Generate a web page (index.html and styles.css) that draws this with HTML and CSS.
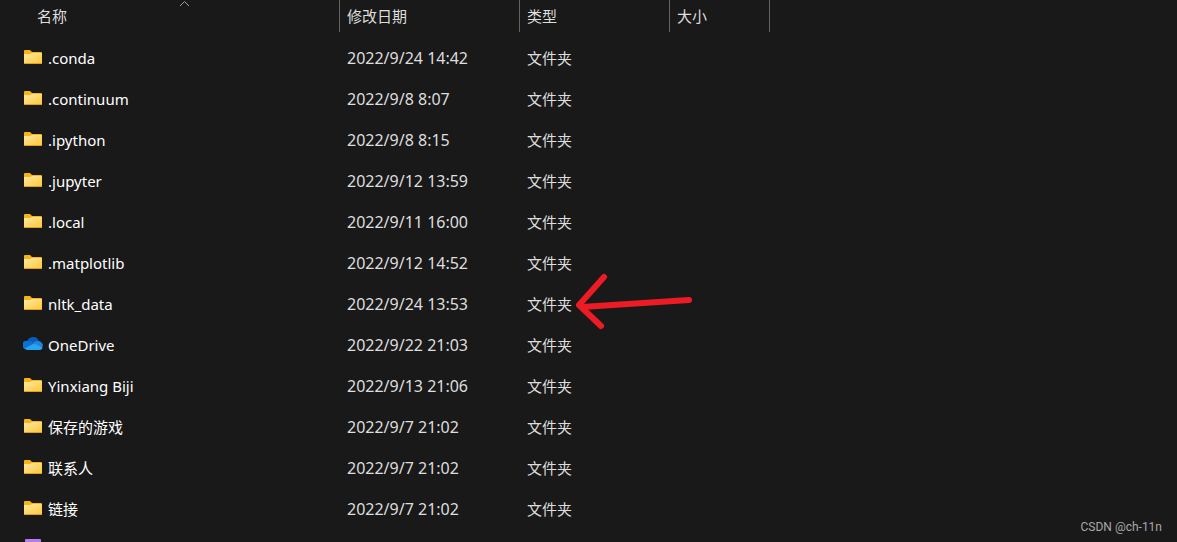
FILE: index.html
```html
<!DOCTYPE html>
<html lang="zh-CN">
<head>
    <meta charset="UTF-8">
    <meta name="viewport" content="width=device-width, initial-scale=1.0">
    <title>文件夹</title>
    <link rel="stylesheet" href="styles.css">
</head>
<body>
    <!-- Shared icons -->
    <svg class="sprites" aria-hidden="true">
        <defs>
            <linearGradient id="folder-front" x1="0" y1="0" x2="1" y2="1">
                <stop offset="0" stop-color="#ffe8a3"></stop>
                <stop offset="1" stop-color="#fdc93c"></stop>
            </linearGradient>
            <symbol id="folder" viewBox="0 0 20 16">
                <path d="M1 2a1 1 0 0 1 1-1h5l2 2h9a1 1 0 0 1 1 1v10H1z" fill="#f7b416"></path>
                <path d="M1 5h6l2-1h10v9a1 1 0 0 1-1 1H2a1 1 0 0 1-1-1z" fill="url(#folder-front)"></path>
                <path d="M1 14h18v1H1z" fill="#e0a020"></path>
            </symbol>
            <symbol id="cloud" viewBox="0 0 20 16">
                <path d="M4 6a6.300 6.300 0 0 1 12-1l-3 6-8-2z" fill="#0b5cb8"></path>
                <path d="M5 5c2 0 4 .8 6 2.200L8 12l-6 1A4.200 4.200 0 0 1 5 5z" fill="#0a72d4"></path>
                <path d="M15 5a5 5 0 0 1 5 5l-2 2-8-5a6 6 0 0 1 5-2z" fill="#1a86e0"></path>
                <path d="M1.500 12.500L11 7.500l8.700 4A3 3 0 0 1 17 14H4.500a4 4 0 0 1-3-1.500z" fill="#2aa4ee"></path>
            </symbol>
        </defs>
    </svg>

    <table class="files">
        <colgroup>
            <col class="col-name">
            <col class="col-date">
            <col class="col-type">
            <col class="col-size">
            <col>
        </colgroup>
        <thead>
            <tr>
                <th class="sorted">
                    <div class="head">名称</div>
                    <svg class="caret" viewBox="0 0 11 7"><path d="M1 6l4.500-4.500L10 6" fill="none" stroke="#a0a0a0"></path></svg>
                </th>
                <th><div class="head">修改日期</div></th>
                <th><div class="head">类型</div></th>
                <th><div class="head">大小</div></th>
                <th></th>
            </tr>
        </thead>
        <tbody>
            <tr><td><div class="name"><svg class="icon"><use href="#folder"></use></svg>.conda</div></td><td class="date">2022/9/24 14:42</td><td>文件夹</td><td></td><td></td></tr>
            <tr><td><div class="name"><svg class="icon"><use href="#folder"></use></svg>.continuum</div></td><td class="date">2022/9/8 8:07</td><td>文件夹</td><td></td><td></td></tr>
            <tr><td><div class="name"><svg class="icon"><use href="#folder"></use></svg>.ipython</div></td><td class="date">2022/9/8 8:15</td><td>文件夹</td><td></td><td></td></tr>
            <tr><td><div class="name"><svg class="icon"><use href="#folder"></use></svg>.jupyter</div></td><td class="date">2022/9/12 13:59</td><td>文件夹</td><td></td><td></td></tr>
            <tr><td><div class="name"><svg class="icon"><use href="#folder"></use></svg>.local</div></td><td class="date">2022/9/11 16:00</td><td>文件夹</td><td></td><td></td></tr>
            <tr><td><div class="name"><svg class="icon"><use href="#folder"></use></svg>.matplotlib</div></td><td class="date">2022/9/12 14:52</td><td>文件夹</td><td></td><td></td></tr>
            <tr>
                <td><div class="name"><svg class="icon"><use href="#folder"></use></svg>nltk_data</div></td>
                <td class="date">2022/9/24 13:53</td>
                <td class="marked">文件夹<svg class="arrow" viewBox="0 0 120 60"><path d="M30 5L5 33l22 21M8 35l107-7" fill="none" stroke="#ed1c24" stroke-width="6" stroke-linecap="round" stroke-linejoin="round"></path></svg></td>
                <td></td>
                <td></td>
            </tr>
            <tr><td><div class="name"><svg class="icon"><use href="#cloud"></use></svg>OneDrive</div></td><td class="date">2022/9/22 21:03</td><td>文件夹</td><td></td><td></td></tr>
            <tr><td><div class="name"><svg class="icon"><use href="#folder"></use></svg>Yinxiang Biji</div></td><td class="date">2022/9/13 21:06</td><td>文件夹</td><td></td><td></td></tr>
            <tr><td><div class="name"><svg class="icon"><use href="#folder"></use></svg>保存的游戏</div></td><td class="date">2022/9/7 21:02</td><td>文件夹</td><td></td><td></td></tr>
            <tr><td><div class="name"><svg class="icon"><use href="#folder"></use></svg>联系人</div></td><td class="date">2022/9/7 21:02</td><td>文件夹</td><td></td><td></td></tr>
            <tr><td><div class="name"><svg class="icon"><use href="#folder"></use></svg>链接</div></td><td class="date">2022/9/7 21:02</td><td>文件夹</td><td></td><td></td></tr>
            <tr class="cut"><td><div class="tile"></div></td><td></td><td></td><td></td><td></td></tr>
        </tbody>
    </table>

    <div class="watermark">CSDN @ch-11n</div>
</body>
</html>
```
FILE: styles.css
```css
/* General Style */
body {
    position: relative;
    min-height: 100vh;
    margin: 0;
    background-color: #191919;
    color: #dedede;
    font-family: 'Noto Sans', 'Noto Sans CJK SC', sans-serif;
    font-size: 15px;
    line-height: 20px;
}

.sprites {
    position: absolute;
    width: 0;
    height: 0;
}

/* File list */
.files {
    width: 100%;
    table-layout: fixed;
    border-collapse: collapse;
}

.col-name {
    width: 340px;
}

.col-date {
    width: 180px;
}

.col-type {
    width: 150px;
}

.col-size {
    width: 100px;
}

th {
    height: 37px;
    padding: 0;
    font-weight: normal;
    text-align: left;
    vertical-align: top;
}

.head {
    height: 32px;
    padding-left: 7px;
    border-right: 1px solid #636363;
    line-height: 32px;
}

.sorted {
    position: relative;
}

.sorted .head {
    padding-left: 37px;
}

.caret {
    position: absolute;
    top: 0;
    left: 179px;
    width: 11px;
    height: 7px;
}

td {
    height: 41px;
    padding: 0 0 0 7px;
    white-space: nowrap;
}

td:first-child {
    padding-left: 23px;
    color: #fff;
}

.date {
    font-size: 16px;
}

.name {
    display: flex;
    align-items: center;
    gap: 5px;
}

.icon {
    width: 20px;
    height: 16px;
    margin-bottom: 2px;
}

/* Last row, only its top edge is visible */
.cut td {
    height: 13px;
    line-height: 0;
    vertical-align: bottom;
}

.tile {
    width: 16px;
    height: 3px;
    margin-left: 2px;
    border-radius: 1px 1px 0 0;
    background-color: #b57bee;
}

/* Arrow over the nltk_data row */
.marked {
    position: relative;
}

.arrow {
    position: absolute;
    top: -11px;
    left: 54px;
    width: 120px;
    height: 60px;
}

.watermark {
    position: absolute;
    right: 15px;
    bottom: 8px;
    color: #a8a8a8;
    font-family: Roboto, sans-serif;
    font-size: 12px;
    line-height: 14px;
}
```
